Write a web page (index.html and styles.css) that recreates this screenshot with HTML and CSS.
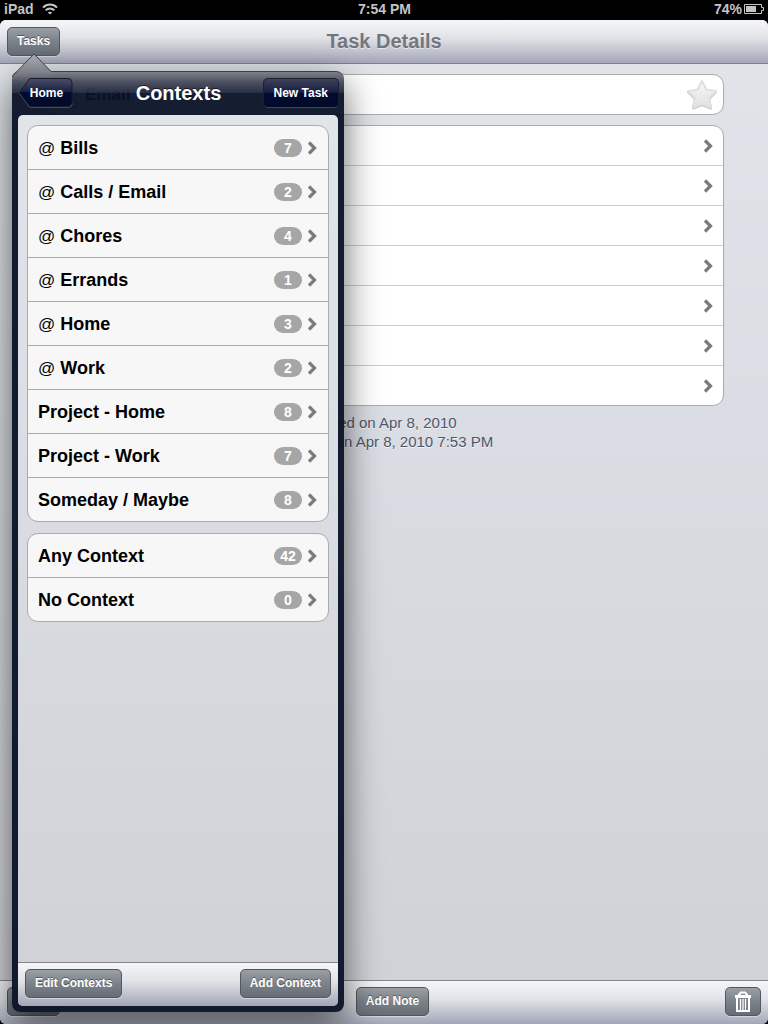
FILE: index.html
```html
<!DOCTYPE html>
<html lang="en">
<head>
  <meta charset="UTF-8">
  <meta name="viewport" content="width=device-width, initial-scale=1.0">
  <title>Task Details</title>
  <link rel="stylesheet" href="styles.css">
</head>
<body>
  <svg class="symbols" aria-hidden="true">
    <symbol id="chevron" viewBox="0 0 11 14">
      <path d="M2 1.500l5.500 5.500L2 12.500" fill="none" stroke="#7b7b7b" stroke-width="3.200"/>
    </symbol>
  </svg>

  <div class="status-bar">
    <div class="status-left">
      <span>iPad</span>
      <svg width="16" height="12" viewBox="0 0 16 12" fill="none" stroke="#c4c4c4" stroke-width="2">
        <path d="M1 4.6C5 .6 11 .6 15 4.6"/>
        <path d="M3.6 7.4c2.5-2.4 6.300-2.400 8.800 0"/>
        <path d="M8 11.600L5.800 9.400c1.300-1 3.100-1 4.400 0z" fill="#c4c4c4" stroke="none"/>
      </svg>
    </div>
    <div class="status-time">7:54 PM</div>
    <div class="status-right">
      <span>74%</span>
      <svg width="21" height="10" viewBox="0 0 21 10">
        <path d="M.5.5h17v3h2v3h-2v3H.5z" fill="none" stroke="#c4c4c4"/>
        <path d="M2 2h10v6H2z" fill="#c4c4c4"/>
      </svg>
    </div>
  </div>

  <div class="app">
    <header class="toolbar toolbar-top">
      <button class="button">Tasks</button>
      <h1>Task Details</h1>
    </header>

    <main class="details">
      <div class="card title-card">
        <input type="checkbox" class="task-check" aria-label="Completed">
        <span class="task-title">Email C</span>
        <button class="star" aria-label="Star">
          <svg width="34" height="34" viewBox="0 0 34 34">
            <defs>
              <linearGradient id="star-fill" x1="0" y1="0" x2="0" y2="1">
                <stop offset="0" stop-color="#fafafa"/>
                <stop offset=".5" stop-color="#ececec"/>
                <stop offset="1" stop-color="#e2e2e2"/>
              </linearGradient>
            </defs>
            <path d="M17 4l4.500 8.700 9.500 1.300-6.800 7 1.800 9.500-9-3.500-9 3.500 1.800-9.500L3 14l9.500-1.300z" fill="#c4c4c4" stroke="#c4c4c4" stroke-width="2" stroke-linejoin="round"/>
            <path d="M17 3l4.500 8.700 9.500 1.300-6.800 7 1.800 9.500-9-3.500-9 3.500 1.800-9.500L3 13l9.500-1.300z" fill="url(#star-fill)" stroke="#e0e0e0" stroke-width="2" stroke-linejoin="round"/>
          </svg>
        </button>
      </div>

      <ul class="card fields">
        <li><a href="#" aria-label="Folder"><svg class="chevron"><use href="#chevron"/></svg></a></li>
        <li><a href="#" aria-label="Context"><svg class="chevron"><use href="#chevron"/></svg></a></li>
        <li><a href="#" aria-label="Due date"><svg class="chevron"><use href="#chevron"/></svg></a></li>
        <li><a href="#" aria-label="Repeat"><svg class="chevron"><use href="#chevron"/></svg></a></li>
        <li><a href="#" aria-label="Priority"><svg class="chevron"><use href="#chevron"/></svg></a></li>
        <li><a href="#" aria-label="Tags"><svg class="chevron"><use href="#chevron"/></svg></a></li>
        <li><a href="#" aria-label="Notes"><svg class="chevron"><use href="#chevron"/></svg></a></li>
      </ul>

      <p class="dates">Added on Apr 8, 2010<br>Modified on Apr 8, 2010 7:53 PM</p>
    </main>

    <footer class="toolbar toolbar-bottom">
      <button class="button edit-button" aria-label="Edit"></button>
      <button class="button">Add Note</button>
      <button class="button trash-button" aria-label="Delete">
        <svg width="18" height="22" viewBox="0 0 18 22" fill="none" stroke="#fff">
          <path d="M5 5V3.500L7 1.500h4l2 2V5" stroke-width="2"/>
          <path d="M1 5.500h16" stroke-width="3"/>
          <path d="M3 6.500V20h12V6.500" stroke-width="2"/>
          <path d="M6.500 8v11M9 8v11M11.500 8v11" stroke-width="1.300"/>
        </svg>
      </button>
    </footer>
  </div>

  <div class="popover">
    <svg class="arrow" width="42" height="24" viewBox="0 0 42 24">
      <defs>
        <linearGradient id="arrow-fill" x1="0" y1="0" x2="0" y2="1">
          <stop offset="0" stop-color="#a9abb5"/>
          <stop offset=".8" stop-color="#7d8089"/>
          <stop offset="1" stop-color="#6b6e79"/>
        </linearGradient>
      </defs>
      <path d="M0 24L22 1l18 18v5z" fill="url(#arrow-fill)"/>
      <path d="M.5 24v-1L22 1l17 17.500h3" fill="none" stroke="#3c3e47"/>
    </svg>

    <header class="popover-header">
      <button class="nav-button back-button">
        <svg class="back-shape" width="55" height="30" viewBox="0 0 55 30">
          <defs>
            <linearGradient id="back-fill" x1="0" y1="0" x2="0" y2="1">
              <stop offset="0" stop-color="#4b5068"/>
              <stop offset=".5" stop-color="#151c3f"/>
              <stop offset=".5" stop-color="#020a30"/>
              <stop offset="1" stop-color="#020a2a"/>
            </linearGradient>
          </defs>
          <path d="M13 .5h37a4 4 0 0 1 4 4v20a4 4 0 0 1-4 4H13q-2 0-3-2L1 15 10 3q1-2.500 3-2.500z" fill="url(#back-fill)" stroke="#151a2c"/>
          <path d="M1 15l9 12q1 2.500 3 2.500h37q4 0 4.500-4" fill="none" stroke="#454b5e"/>
        </svg>
        <span>Home</span>
      </button>
      <h2>Contexts</h2>
      <button class="nav-button new-button">New Task</button>
    </header>

    <div class="popover-frame">
      <div class="popover-body">
        <div class="contexts">
          <ul class="card context-list">
            <li><a href="#"><span class="name"><span class="at">@</span> Bills</span><span class="badge">7</span><svg class="chevron"><use href="#chevron"/></svg></a></li>
            <li><a href="#"><span class="name"><span class="at">@</span> Calls / Email</span><span class="badge">2</span><svg class="chevron"><use href="#chevron"/></svg></a></li>
            <li><a href="#"><span class="name"><span class="at">@</span> Chores</span><span class="badge">4</span><svg class="chevron"><use href="#chevron"/></svg></a></li>
            <li><a href="#"><span class="name"><span class="at">@</span> Errands</span><span class="badge">1</span><svg class="chevron"><use href="#chevron"/></svg></a></li>
            <li><a href="#"><span class="name"><span class="at">@</span> Home</span><span class="badge">3</span><svg class="chevron"><use href="#chevron"/></svg></a></li>
            <li><a href="#"><span class="name"><span class="at">@</span> Work</span><span class="badge">2</span><svg class="chevron"><use href="#chevron"/></svg></a></li>
            <li><a href="#"><span class="name">Project - Home</span><span class="badge">8</span><svg class="chevron"><use href="#chevron"/></svg></a></li>
            <li><a href="#"><span class="name">Project - Work</span><span class="badge">7</span><svg class="chevron"><use href="#chevron"/></svg></a></li>
            <li><a href="#"><span class="name">Someday / Maybe</span><span class="badge">8</span><svg class="chevron"><use href="#chevron"/></svg></a></li>
          </ul>
          <ul class="card context-list">
            <li><a href="#"><span class="name">Any Context</span><span class="badge">42</span><svg class="chevron"><use href="#chevron"/></svg></a></li>
            <li><a href="#"><span class="name">No Context</span><span class="badge">0</span><svg class="chevron"><use href="#chevron"/></svg></a></li>
          </ul>
        </div>

        <footer class="toolbar toolbar-bottom">
          <button class="button">Edit Contexts</button>
          <button class="button">Add Context</button>
        </footer>
      </div>
    </div>
  </div>
</body>
</html>
```

FILE: styles.css
```css
:root {
  --navy: rgba(12, 21, 41, 0.97);
  --line: #a9abae;
  --chrome: linear-gradient(#f5f6f8, #e3e4e9 40%, #a3a6b7);
  --page: linear-gradient(#e1e5ea, #dadde3 40%, #d0d1d6);
}

* {
  margin: 0;
  padding: 0;
  box-sizing: border-box;
}

body {
  position: relative;
  display: flex;
  flex-direction: column;
  min-height: 100vh;
  overflow: hidden;
  background: #000;
  font-family: "Liberation Sans", Arial, Helvetica, sans-serif;
}

ul {
  list-style: none;
}

a {
  color: inherit;
  text-decoration: none;
}

button {
  font-family: inherit;
  cursor: pointer;
}

.symbols {
  display: none;
}

/* Status bar */
.status-bar {
  display: grid;
  grid-template-columns: 1fr auto 1fr;
  align-items: center;
  height: 20px;
  padding: 0 3px 2px 4px;
  color: #c4c4c4;
  font-size: 14px;
  font-weight: bold;
}

.status-left,
.status-right {
  display: flex;
  align-items: center;
  gap: 8px;
}

.status-right {
  justify-content: flex-end;
  gap: 2px;
}

/* Main screen */
.app {
  flex: 1;
  display: flex;
  flex-direction: column;
  overflow: hidden;
  border-radius: 6px;
  background: var(--page);
}

.toolbar {
  display: flex;
  align-items: center;
  justify-content: space-between;
  height: 44px;
  padding: 0 7px;
  background: var(--chrome);
}

.toolbar-top {
  display: grid;
  grid-template-columns: 1fr auto 1fr;
  border-bottom: 1px solid #7d8193;
}

.toolbar-top .button {
  justify-self: start;
}

.toolbar-bottom {
  padding-bottom: 2px;
  border-top: 1px solid #84868c;
}

h1 {
  color: #72777f;
  font-size: 20px;
  text-shadow: 0 1px 0 rgba(255, 255, 255, 0.5);
}

.button {
  height: 29px;
  padding: 0 9px 1px;
  border: 1px solid #54575c;
  border-radius: 5px;
  background: linear-gradient(#9a9fa5, #7c828a 50%, #666d77);
  box-shadow: 0 1px 0 rgba(255, 255, 255, 0.4);
  color: #fff;
  font-size: 12px;
  font-weight: bold;
  text-shadow: 0 -1px 0 rgba(0, 0, 0, 0.4);
}

.edit-button {
  width: 53px;
}

.trash-button {
  display: flex;
  align-items: center;
  justify-content: center;
  width: 36px;
  padding: 0;
}

.details {
  flex: 1;
  padding: 10px 44px;
}

.card {
  border: 1px solid var(--line);
  border-radius: 11px;
  background: #fff;
}

.title-card {
  display: flex;
  align-items: center;
  height: 41px;
  margin-bottom: 10px;
  padding: 0 4px 0 7px;
}

.task-check {
  width: 25px;
  height: 27px;
  appearance: none;
  border: 1px solid #888;
}

.task-title {
  flex: 1;
  padding-left: 8px;
  font-size: 17px;
  font-weight: bold;
}

.star {
  height: 34px;
  border: 0;
  background: none;
}

.fields a {
  display: flex;
  align-items: center;
  justify-content: flex-end;
  height: 39px;
  padding: 0 9px;
}

.fields li + li,
.context-list li + li {
  border-top: 1px solid var(--line);
}

.fields li + li {
  border-color: #ccc;
}

.chevron {
  width: 11px;
  height: 14px;
}

.dates {
  margin-top: 7px;
  color: #4d566c;
  font-size: 15px;
  line-height: 19px;
  text-align: center;
  text-shadow: 0 1px 0 rgba(255, 255, 255, 0.7);
}

/* Popover, over the main screen */
.popover {
  position: absolute;
  top: 71px;
  bottom: 12px;
  left: 12px;
  display: flex;
  flex-direction: column;
  width: 332px;
  border-radius: 8px;
  box-shadow: 0 12px 36px rgba(0, 0, 0, 0.6);
}

.arrow {
  position: absolute;
  top: -18px;
  left: 0;
}

.popover-header {
  display: grid;
  grid-template-columns: 1fr auto 1fr;
  align-items: center;
  height: 44px;
  padding: 0 5px 1px 6px;
  border-top: 1px solid #3c3e47;
  border-radius: 8px 8px 0 0;
  background: linear-gradient(#7d8089, #4a4e5d 25%, rgba(32, 38, 62, 0.97) 50%, rgba(9, 17, 38, 0.95) 50%, rgba(9, 17, 38, 0.95));
}

h2 {
  color: #fff;
  font-size: 20px;
  text-shadow: 0 -1px 0 rgba(0, 0, 0, 0.6);
}

.nav-button {
  height: 30px;
  border: 0;
  background: none;
  color: #fff;
  font-size: 12px;
  font-weight: bold;
}

.back-button {
  position: relative;
  display: grid;
  align-items: center;
  justify-self: start;
}

.back-button > * {
  grid-area: 1 / 1;
}

.back-button span {
  padding-left: 2px;
}

.new-button {
  justify-self: end;
  padding: 0 10px;
  border: 1px solid #1a2034;
  border-bottom-color: #3f465a;
  border-radius: 5px;
  background: linear-gradient(#3d4259, #151c3f 50%, #020a30 50%, #020a2a);
}

.popover-frame {
  flex: 1;
  display: flex;
  padding: 0 6px 6px;
  border-radius: 0 0 8px 8px;
  background: linear-gradient(var(--navy), var(--navy));
}

.popover-body {
  flex: 1;
  display: flex;
  flex-direction: column;
  overflow: hidden;
  border-radius: 5px;
  background: var(--page);
}

.contexts {
  flex: 1;
  display: flex;
  flex-direction: column;
  gap: 11px;
  padding: 10px 9px;
}

.context-list {
  background: #f7f7f7;
}

.context-list a {
  display: flex;
  align-items: center;
  gap: 5px;
  height: 43px;
  padding: 0 10px;
  font-size: 18px;
  font-weight: bold;
}

.name {
  flex: 1;
  padding-top: 1px;
}

.at {
  font-size: 17px;
  font-weight: normal;
}

.badge {
  width: 28px;
  border-radius: 9px;
  background: #a6a6a6;
  color: #fff;
  font-size: 14px;
  line-height: 18px;
  text-align: center;
}
```
